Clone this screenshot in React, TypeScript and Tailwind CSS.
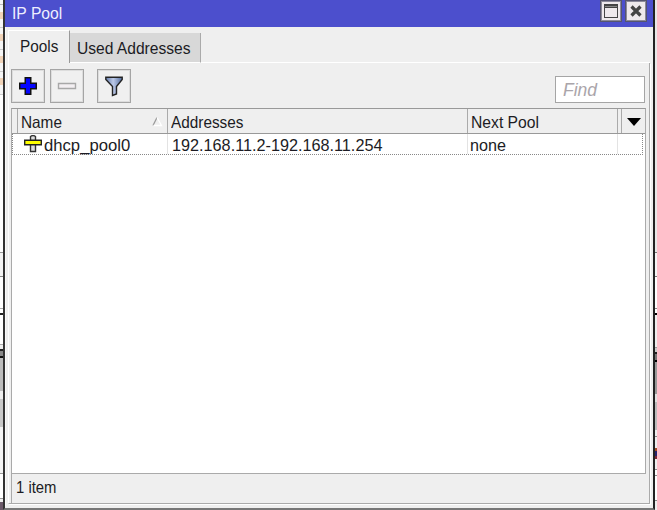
import React from 'react';

const Label: React.FC<{ scale: string; className?: string; children: React.ReactNode }> = ({ scale, className = '', children }) => (
  <span className={`inline-block origin-left whitespace-nowrap ${scale} ${className}`}>{children}</span>
);

const leftStrips = [
  'h-[4px] bg-[#f5f5f5]', 'h-px bg-[#bbbbbb]', 'h-[7px] bg-[#f5f5f5]', 'h-[7px] bg-[#f0d3b8]',
  'h-[8px] bg-[#f5f5f5]', 'h-px bg-[#cccccc]', 'h-[6px] bg-[#f5f5f5]', 'h-[7px] bg-[#f0d3b8]',
  'h-[8px] bg-[#f5f5f5]', 'h-px bg-[#cccccc]', 'h-[6px] bg-[#f5f5f5]', 'h-[7px] bg-[#f0d3b8]',
  'h-[8px] bg-[#f5f5f5]', 'h-px bg-[#cccccc]', 'h-[6px] bg-[#f5f5f5]', 'h-[7px] bg-[#f0d3b8]',
  'h-[9px] bg-[#f5f5f5]', 'h-px bg-[#cccccc]', 'h-[157px] bg-white', 'h-px bg-[#999999]',
  'h-[23px] bg-[#f4f4f4]', 'h-px bg-[#888888]', 'h-[31px] bg-white', 'h-px bg-[#aaaaaa]',
  'h-[4px] bg-white', 'h-[2px] bg-[#222222]', 'h-[29px] bg-white', 'h-px bg-[#aaaaaa]',
  'h-[4px] bg-[#eeeeee]', 'h-[2px] bg-[#222222]', 'h-[5px] bg-[#888888]', 'h-[2px] bg-[#111111]',
  'h-[33px] bg-[#bcbcbc]', 'h-[8px] bg-[#eeeeee]', 'h-[28px] bg-[#c8c8c8]', 'h-[46px] bg-[#f3f3f3]',
  'h-px bg-[#999999]', 'h-[24px] bg-white', 'h-px bg-[#999999]', 'h-[3px] bg-[#eeeeee]',
  'h-[8px] bg-[#6b5969]',
];

const rightStrips = [
  'h-[252px] bg-[#e8e8e8]', 'h-px bg-[#777777]', 'h-[23px] bg-[#f5f5f5]', 'h-px bg-[#777777]',
  'h-[31px] bg-white', 'h-px bg-[#888888]', 'h-[4px] bg-white', 'h-[2px] bg-black',
  'h-[32px] bg-[#eeeeee]', 'h-px bg-[#999999]', 'h-[4px] bg-[#cccccc]', 'h-[2px] bg-[#222222]',
  'h-[6px] bg-[#777777]', 'h-[2px] bg-black', 'h-[32px] bg-[#999999]', 'h-[8px] bg-[#e0e0e0]',
  'h-[28px] bg-[#bbbbbb]', 'h-[6px] bg-[#eeeeee]', 'h-px bg-[#888888]', 'h-[11px] bg-[#eeeeee]',
  'h-[3px] bg-[#a34b27]', 'h-[5px] bg-[#28256e]', 'h-[3px] bg-[#7d2835]', 'h-[10px] bg-[#eeeeee]',
  'h-px bg-[#888888]', 'h-[5px] bg-white', 'h-px bg-[#888888]', 'h-[24px] bg-white', 'h-px bg-[#888888]',
];

const Strips = ({ items }: { items: string[] }) => (
  <>
    {items.map((item, i) => (
      <div key={i} className={`shrink-0 ${item}`} />
    ))}
  </>
);

const TitleButton = ({ children }: { children: React.ReactNode }) => (
  <button className="flex h-[22px] w-[22px] items-center justify-center border border-[#55556f] bg-[#eee9ec] shadow-[inset_0_0_0_1px_#8c8a9a]">
    {children}
  </button>
);

const ToolButton = ({ children }: { children: React.ReactNode }) => (
  <button className="flex h-[34px] w-[34px] items-center justify-center border border-[#a5a5a5] bg-[#f0f0f0] shadow-[inset_0_0_0_1px_#dddddd]">
    {children}
  </button>
);

const TitleBar = () => (
  <div className="flex h-[27px] justify-between bg-[#4c4fcd] pl-[7px] pr-[6px]">
    <Label scale="scale-x-[0.95]" className="text-[16.5px] leading-[27px] text-[#eeeeff]">IP Pool</Label>
    <div className="flex gap-[3px]">
      <TitleButton>
        <svg width="14" height="14" viewBox="0 0 14 14" fill="none" shapeRendering="crispEdges">
          <path d="M0 0H14V14H0Z M1 4V13H13V4Z" fill="#444" fillRule="evenodd" />
          <path d="M1 2.5H13" stroke="#888" />
        </svg>
      </TitleButton>
      <TitleButton>
        <svg width="14" height="14" viewBox="0 0 14 14" fill="none">
          <path d="M2.5 2.5L11.5 11.5M11.5 2.5L2.5 11.5" stroke="#444" strokeWidth="3.2" />
        </svg>
      </TitleButton>
    </div>
  </div>
);

const Tabs = () => (
  <div className="flex h-[36px] items-end pl-[2px]">
    <div className="h-[33px] w-[62px] border-l border-t border-r border-l-white border-t-white border-r-[#999999] pl-[11px]">
      <Label scale="scale-x-[0.93]" className="leading-[30px]">Pools</Label>
    </div>
    <div className="h-[30px] w-[131px] border-b border-r border-b-white border-r-[#aaaaaa] bg-[#d8d8d8] pl-[7px]">
      <Label scale="scale-x-[0.945]" className="leading-[31px]">Used Addresses</Label>
    </div>
    <div className="h-px flex-1 bg-white" />
  </div>
);

const Toolbar = () => (
  <div className="flex h-[45px] items-start pl-[2px] pt-[6px]">
    <ToolButton>
      <svg width="20" height="20" viewBox="0 0 20 20">
        <path d="M6.5 1H13.5V6.5H19V13.5H13.5V19H6.5V13.5H1V6.5H6.5Z" fill="#111" />
        <path d="M8 2.5H12V8H17.5V12H12V17.5H8V12H2.5V8H8Z" fill="#0505ff" />
      </svg>
    </ToolButton>
    <div className="ml-[5px]">
      <ToolButton>
        <svg width="20" height="20" viewBox="0 0 20 20" fill="#f3eff2">
          <path d="M1.5 7.5H18.5V12.5H1.5Z" stroke="#a8a8a8" strokeWidth="1.4" />
        </svg>
      </ToolButton>
    </div>
    <div className="ml-[13px]">
      <ToolButton>
        <svg width="20" height="22" viewBox="0 0 20 22">
          <defs>
            <linearGradient id="funnel">
              <stop offset="0" stopColor="#647ba9" />
              <stop offset=".45" stopColor="#bdcae8" />
              <stop offset="1" stopColor="#526c9e" />
            </linearGradient>
          </defs>
          <path d="M1.8 2.2H18.2V4.5L12.5 11.5V19L8.5 20.5V11.5L1.8 4.5Z" fill="url(#funnel)" stroke="#242424" strokeWidth="1.4" />
        </svg>
      </ToolButton>
    </div>
    <input
      placeholder="Find"
      className="ml-auto mr-[4px] mt-[7px] h-[27px] w-[90px] border border-[#a5a5a5] bg-white pl-[7px] pt-[2px] text-[17.5px] italic outline-none placeholder:text-[#aaa5aa]"
    />
  </div>
);

const PoolTable = () => (
  <div className="ml-[2px] mr-[3px] flex h-[366px] flex-col border border-b-[#aaaaaa] border-l-[#aaaaaa] border-r-[#aaaaaa] border-t-[#999999] bg-white">
    <div className="flex h-[25px] shrink-0 border-b border-[#999999] bg-[#efefef] leading-[26px]">
      <div className="w-[6px] border-r border-[#aaaaaa]" />
      <div className="flex w-[150px] items-center justify-between border-r border-[#aaaaaa] pl-[3px] pr-[4px]">
        <Label scale="scale-x-[0.93]" className="pt-[2px]">Name</Label>
        <svg width="12" height="12" viewBox="0 0 12 12" fill="none">
          <path d="M2 10.5L6 2.5" stroke="#999999" strokeWidth="1.3" />
          <path d="M6 2.5L10.5 10.5H2.5" stroke="white" strokeWidth="1.3" />
        </svg>
      </div>
      <div className="w-[300px] border-r border-[#aaaaaa] pl-[3px]"><Label scale="scale-x-[0.93]">Addresses</Label></div>
      <div className="w-[150px] border-r border-[#aaaaaa] pl-[3px]"><Label scale="scale-x-[0.95]">Next Pool</Label></div>
      <div className="w-[4px] border-r border-[#aaaaaa]" />
      <div className="flex flex-1 items-center justify-center pt-[2px]">
        <svg width="14" height="8" viewBox="0 0 14 8"><path d="M0 0H14L7 8Z" fill="#000" /></svg>
      </div>
    </div>
    <div className="mr-[2px] flex h-[21px] shrink-0 border-b border-l border-r border-dotted border-[#888888] leading-[22px]">
      <div className="flex w-[155px] items-center border-r border-solid border-[#e3e3e3] pl-[11px]">
        <svg className="shrink-0" width="18" height="18" viewBox="0 0 18 18">
          <path d="M6.5 1.5Q9 -.5 11.5 1.5V16.5H6.5Z" fill="#ddd" stroke="#333" strokeWidth="1.4" />
          <path d="M.7 5.2H17.3V9.8H.7Z" fill="#ffff00" stroke="#222" strokeWidth="1.4" />
        </svg>
        <Label scale="scale-x-[1.01]" className="ml-[2px] pt-px">dhcp_pool0</Label>
      </div>
      <div className="w-[300px] border-r border-solid border-[#e3e3e3] pl-[4px]"><Label scale="scale-x-[0.983]">192.168.11.2-192.168.11.254</Label></div>
      <div className="w-[150px] border-r border-solid border-[#e3e3e3] pl-[2px]"><Label scale="scale-x-[0.98]">none</Label></div>
    </div>
  </div>
);

export default function App() {
  return (
    <div className="flex h-[510px] w-[657px] overflow-hidden bg-[#eeeeee] font-['Liberation_Sans',Arial,sans-serif] text-[16.5px] text-[#1c1c24]">
      <div className="flex w-[3px] flex-col"><Strips items={leftStrips} /></div>
      <div className="flex w-[652px] flex-col border-b-2 border-l-2 border-r-2 border-b-[#777777] border-l-[#333333] border-r-[#222222] bg-[#efefef]">
        <TitleBar />
        <div className="flex h-[479px] flex-col border-l border-[#fafafa] pr-[3px]">
          <Tabs />
          <div className="ml-[2px] flex h-[441px] flex-col border-b border-l border-r border-b-[#aaaaaa] border-l-white border-r-[#aaaaaa] shadow-[1px_1px_0_#ffffff]">
            <Toolbar />
            <PoolTable />
            <div className="ml-[2px] h-[29px] border-l border-[#aaaaaa] pl-[4px] leading-[26px]">
              <Label scale="scale-x-[0.9]">1 item</Label>
            </div>
          </div>
        </div>
      </div>
      <div className="flex w-[2px] flex-col"><Strips items={rightStrips} /></div>
    </div>
  );
}
